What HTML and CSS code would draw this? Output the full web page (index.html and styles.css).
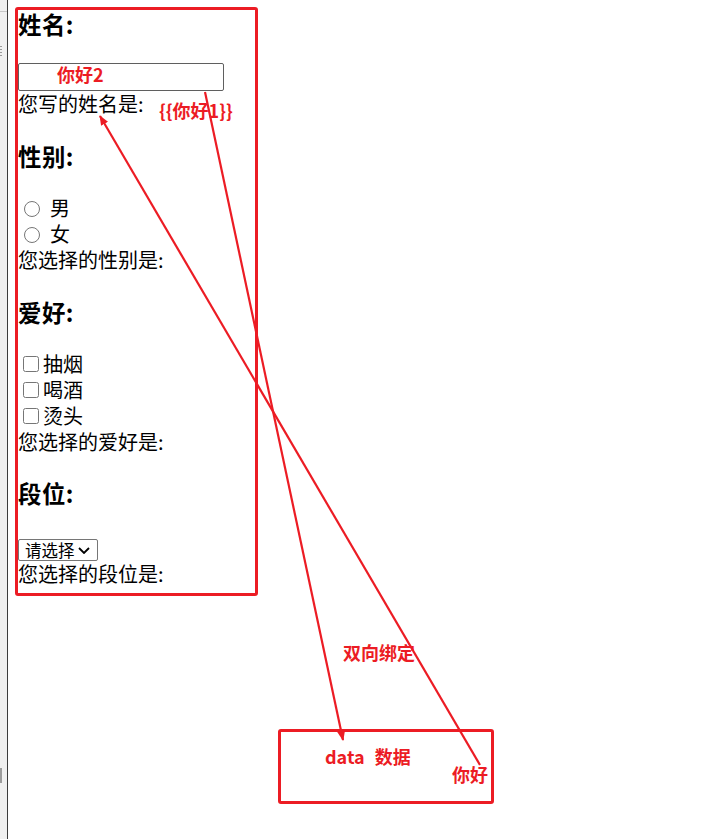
FILE: index.html
```html
<!DOCTYPE html>
<html lang="zh">
<head>
<meta charset="utf-8">
<title>双向绑定</title>
<link rel="stylesheet" href="styles.css">
</head>
<body>
<div class="strip">
  <span class="strip-top"></span>
  <span class="grip"></span>
  <span class="strip-mark"></span>
</div>
<main class="app">
  <h3 class="title">姓名:</h3>
  <input type="text" class="name-input">
  <div class="line">您写的姓名是:</div>

  <h3 class="title">性别:</h3>
  <label class="opt opt-radio"><input type="radio" name="sex">男</label>
  <label class="opt opt-radio"><input type="radio" name="sex">女</label>
  <div class="line">您选择的性别是:</div>

  <h3 class="title">爱好:</h3>
  <label class="opt opt-check"><input type="checkbox">抽烟</label>
  <label class="opt opt-check"><input type="checkbox">喝酒</label>
  <label class="opt opt-check"><input type="checkbox">烫头</label>
  <div class="line">您选择的爱好是:</div>

  <h3 class="title">段位:</h3>
  <div class="select-row">
    <span class="select-wrap">
      <select class="rank"><option>请选择</option></select>
      <svg class="chev" width="12" height="7" viewBox="0 0 12 7"><path d="M1 1 L6 6 L11 1" fill="none" stroke="#000" stroke-width="1.8"/></svg>
    </span>
  </div>
  <div class="line">您选择的段位是:</div>
</main>

<div class="annot">
  <svg class="annot-svg" width="705" height="839" viewBox="0 0 705 839">
    <defs>
      <marker id="ah" markerWidth="10" markerHeight="8" refX="9" refY="4" orient="auto" markerUnits="userSpaceOnUse">
        <path d="M0 0 L10 4 L0 8 Z" fill="#ec1c24"/>
      </marker>
    </defs>
    <rect x="16.5" y="8.5" width="240" height="586" rx="1.5" fill="none" stroke="#ec1c24" stroke-width="3"/>
    <rect x="279.5" y="730.5" width="213" height="72" rx="1.5" fill="none" stroke="#ec1c24" stroke-width="3"/>
    <line x1="205" y1="92" x2="343" y2="740" stroke="#ec1c24" stroke-width="2.2" marker-end="url(#ah)"/>
    <line x1="480" y1="765" x2="100" y2="116" stroke="#ec1c24" stroke-width="2.2" marker-end="url(#ah)"/>
  </svg>
  <span class="tag tag-input">你好2</span>
  <span class="tag tag-model">{{你好1}}</span>
  <span class="tag tag-bind">双向绑定</span>
  <span class="tag tag-data">data<span class="gap"></span>数据</span>
  <span class="tag tag-value">你好</span>
</div>
</body>
</html>
```

FILE: styles.css
```css
html, body {
  margin: 0;
  padding: 0;
  background: #fff;
}

body {
  display: flex;
  min-height: 839px;
  font-family: "Microsoft YaHei", "Noto Sans CJK SC", "Noto Sans", sans-serif;
  color: #000;
  position: relative;
  overflow: hidden;
}

.strip {
  width: 7px;
  flex: 0 0 7px;
  background: #f0f0f0;
  border-right: 1px solid #3c3c3c;
  position: relative;
}

.strip-top {
  position: absolute;
  left: 0;
  top: 11px;
  width: 7px;
  height: 1px;
  background: #c8c8c8;
}

.grip {
  position: absolute;
  left: 0;
  top: 46px;
  width: 2px;
  height: 11px;
  background: repeating-linear-gradient(#9a9a9a 0 1px, transparent 1px 3px);
}

.strip-mark {
  position: absolute;
  left: 0;
  top: 768px;
  width: 2px;
  height: 15px;
  background: #9c9c9c;
}

.app {
  padding: 9px 0 0 10px;
  font-size: 20px;
  line-height: 26px;
}

.title {
  font-size: 23.4px;
  line-height: 31px;
  font-weight: bold;
  margin: 23.4px 0;
  letter-spacing: 0.5px;
}

.title:first-child {
  margin-top: 0;
}

.name-input {
  display: block;
  box-sizing: border-box;
  width: 206px;
  height: 28px;
  margin: 1px 0 0;
  border: 1px solid #5f5f5f;
  border-radius: 2px;
  padding: 0 4px;
  font-size: 17px;
  background: #fff;
}

.line {
  height: 26px;
  white-space: nowrap;
}

.opt {
  display: flex;
  align-items: center;
  height: 26px;
}

.opt input {
  width: 16px;
  height: 16px;
  margin: 0;
  flex: 0 0 auto;
}

.opt-radio input {
  margin: 1px 10px 0 6px;
}

.opt-check input {
  margin: 1px 4px 0 5px;
}

.select-row {
  height: 28px;
  box-sizing: border-box;
  padding-top: 3px;
}

.select-wrap {
  display: inline-flex;
  position: relative;
}

.rank {
  appearance: none;
  -webkit-appearance: none;
  box-sizing: border-box;
  width: 80px;
  height: 22px;
  margin: 0;
  padding: 0 0 0 6px;
  border: 1px solid #767676;
  border-radius: 2px;
  background: #fff;
  color: #000;
  font-family: "Microsoft YaHei", "Noto Sans CJK SC", sans-serif;
  font-size: 16.5px;
  line-height: 20px;
}

.chev {
  position: absolute;
  left: 60px;
  top: 8px;
  pointer-events: none;
}

.annot {
  position: absolute;
  left: 0;
  top: 0;
  width: 705px;
  height: 839px;
  pointer-events: none;
}

.annot-svg {
  position: absolute;
  left: 0;
  top: 0;
}

.tag {
  position: absolute;
  color: #ec1c24;
  font-weight: bold;
  font-size: 18px;
  line-height: 20px;
  white-space: nowrap;
  font-family: "Microsoft YaHei", "Noto Sans CJK SC", "Noto Sans", sans-serif;
}

.tag-input { left: 57px; top: 64px; }
.tag-model { left: 159px; top: 100px; }
.tag-bind { left: 343px; top: 642px; }
.tag-data { left: 325px; top: 746px; }
.tag-value { left: 452px; top: 764px; }

.gap {
  display: inline-block;
  width: 10px;
}
```
